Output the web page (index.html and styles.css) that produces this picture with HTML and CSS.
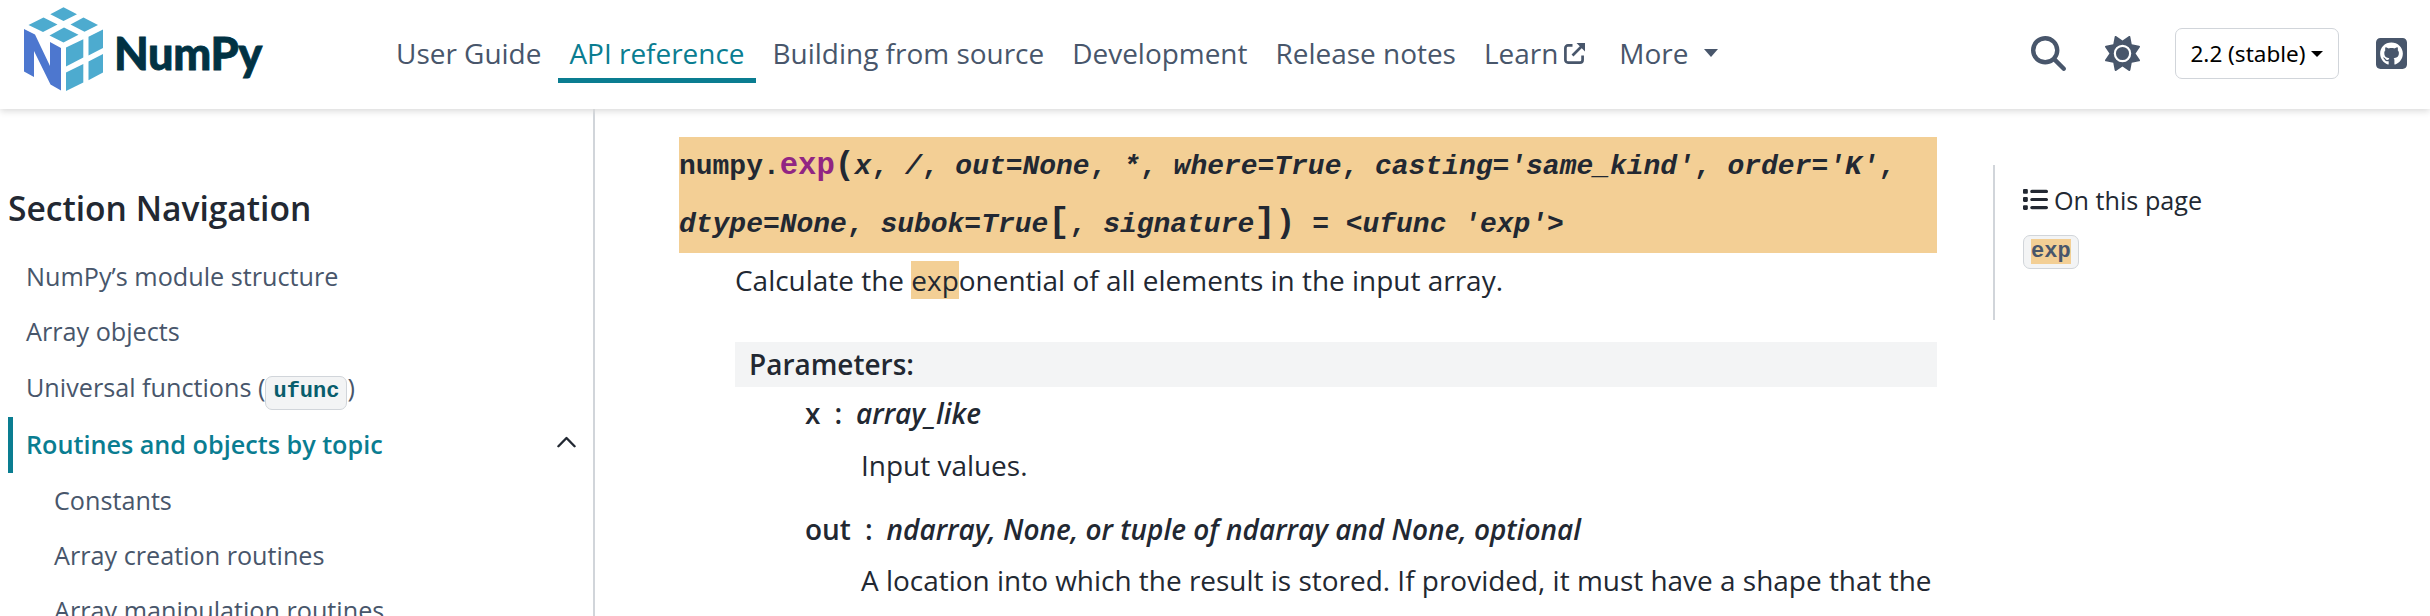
FILE: index.html
```html
<!DOCTYPE html>
<html lang="en">
<head>
<meta charset="utf-8">
<title>numpy.exp — NumPy v2.2 Manual</title>
<link rel="stylesheet" href="styles.css">
</head>
<body>
<header class="header">
  <a class="logo">
    <svg class="logo-mark" viewBox="0 0 80 86" width="80" height="86">
      <g fill="#4dabcf">
        <path d="M39.5 0.3 53 7.3 39.5 14 26.300 7.300Z"/>
        <path d="M19.500 10.500 33.500 17.500 19 25 4.500 18Z"/>
        <path d="M59.500 10.500 74 18 60.500 24.800 46.500 17.500Z"/>
        <path d="M40 20.500 54.500 27.800 39.500 35.500 25.500 28.500Z"/>
        <path d="M42 40.500 59.300 32.300V50.500L42 59.500Z"/>
        <path d="M64.500 29.800 79 22.500V41L64.500 48.500Z"/>
        <path d="M42 65.500 59.300 57V75.500L42 84Z"/>
        <path d="M64.500 54.500 79 47V65.500L64.500 73.300Z"/>
      </g>
      <path fill="#4d77cf" d="M0 22 11 27.500 26 59V35L37 41V83.500L26.500 77.500 10 44V70L0 64.500Z"/>
    </svg>
    <span class="logo-text">NumPy</span>
  </a>
  <nav class="nav">
    <a>User Guide</a>
    <a class="current">API reference</a>
    <a>Building from source</a>
    <a>Development</a>
    <a>Release notes</a>
    <a class="ext">Learn<svg viewBox="0 0 21 21" width="21" height="21" fill="none" stroke="currentColor" stroke-width="2.700"><path d="M8.500 2.400H4a2.600 2.600 0 0 0-2.600 2.600V17A2.600 2.600 0 0 0 4 19.600H16A2.600 2.600 0 0 0 18.600 17V12.500M8.500 12.500 17.500 3.500"/><path fill="currentColor" stroke="none" d="M12.500 0H21V8.500Z"/></svg></a>
    <a class="more">More<i class="caret"></i></a>
  </nav>
  <div class="tools">
    <svg class="ic-search" viewBox="0 0 512 512" width="35" height="35"><path fill="currentColor" d="M416 208c0 45.900-14.900 88.300-40 122.700L502.600 457.400c12.500 12.500 12.500 32.800 0 45.300s-32.800 12.500-45.300 0L330.700 376c-34.400 25.200-76.800 40-122.700 40C93.100 416 0 322.900 0 208S93.100 0 208 0S416 93.100 416 208zM208 352a144 144 0 1 0 0-288 144 144 0 1 0 0 288z"/></svg>
    <svg class="ic-sun" viewBox="0 0 512 512" width="35" height="35"><path fill="currentColor" d="M361.500 1.200c5 2.100 8.600 6.600 9.600 11.900L391 121l107.900 19.800c5.300 1 9.800 4.600 11.900 9.600s1.500 10.700-1.600 15.200L446.900 256l62.300 90.300c3.100 4.500 3.700 10.200 1.600 15.200s-6.600 8.600-11.900 9.600L391 391 371.100 498.900c-1 5.300-4.600 9.800-9.600 11.900s-10.700 1.500-15.200-1.600L256 446.900l-90.300 62.300c-4.500 3.100-10.200 3.700-15.200 1.600s-8.600-6.600-9.600-11.900L121 391 13.100 371.100c-5.300-1-9.800-4.600-11.900-9.600s-1.500-10.700 1.600-15.200L65.100 256 2.800 165.700c-3.100-4.500-3.700-10.200-1.600-15.200s6.600-8.600 11.900-9.600L121 121 140.900 13.100c1-5.300 4.600-9.800 9.600-11.900s10.700-1.500 15.200 1.600L256 65.100 346.300 2.800c4.500-3.100 10.200-3.700 15.200-1.600zM160 256a96 96 0 1 1 192 0 96 96 0 1 1 -192 0zm224 0a128 128 0 1 0 -256 0 128 128 0 1 0 256 0z"/></svg>
    <button class="version">2.2 (stable)<i class="caret"></i></button>
    <svg class="ic-github" viewBox="0 32 448 448" width="31" height="31"><path fill="currentColor" d="M448 96c0-35.300-28.700-64-64-64H64C28.700 32 0 60.700 0 96V416c0 35.300 28.700 64 64 64H384c35.300 0 64-28.700 64-64V96zM265.800 407.700c0-1.800 0-6 .1-11.600c.1-11.400 .1-28.800 .1-43.700c0-15.600-5.200-25.500-11.300-30.700c37-4.100 76-9.200 76-73.100c0-18.200-6.500-27.300-17.100-39c1.700-4.300 7.400-22-1.700-45c-13.900-4.300-45.700 17.900-45.700 17.900c-13.200-3.700-27.500-5.600-41.600-5.600s-28.400 1.900-41.600 5.600c0 0-31.800-22.200-45.700-17.900c-9.100 22.900-3.500 40.600-1.700 45c-10.600 11.700-15.600 20.800-15.600 39c0 63.600 37.300 69 74.300 73.100c-4.800 4.300-9.100 11.700-10.600 22.300c-9.500 4.300-33.800 11.700-48.300-13.900c-9.100-15.800-25.500-17.100-25.500-17.100c-16.200-.2-1.100 10.200-1.100 10.200c10.800 5 18.400 24.200 18.400 24.200c9.700 29.700 56.100 19.700 56.100 19.700c0 9 .1 21.700 .1 30.600c0 4.800 .1 8.600 .1 10c0 4.300-3 9.500-11.500 8C106 393.600 59.800 330.800 59.800 257.400c0-91.800 70.200-161.500 162-161.500s166.200 69.700 166.200 161.500c.1 73.400-44.700 136.300-110.700 158.300c-8.400 1.500-11.500-3.700-11.500-8z"/></svg>
  </div>
</header>
<div class="page">
  <aside class="sidebar">
    <p class="side-title">Section Navigation</p>
    <ul class="side-list">
      <li><a>NumPy’s module structure</a></li>
      <li><a>Array objects</a></li>
      <li class="row-code"><a>Universal functions (<code>ufunc</code>)</a></li>
      <li class="active"><a>Routines and objects by topic</a><svg viewBox="0 0 20 12" width="19" height="12" fill="none" stroke="currentColor" stroke-width="2.500" stroke-linecap="round" stroke-linejoin="round"><path d="M1.500 10.500 10 1.800 18.500 10.500"/></svg></li>
      <li class="sub"><a>Constants</a></li>
      <li class="sub"><a>Array creation routines</a></li>
      <li class="sub"><a>Array manipulation routines</a></li>
    </ul>
  </aside>
  <main class="content">
    <div class="sig">numpy.<span class="name">exp</span><span class="paren">(</span><em>x</em>, <em>/</em>, <em>out=None</em>, <em>*</em>, <em>where=True</em>, <em>casting='same_kind'</em>, <em>order='K'</em>,<br><em>dtype=None</em>, <em>subok=True</em><span class="bracket">[</span>, <em>signature</em><span class="bracket">]</span><span class="paren">)</span> <em>= &lt;ufunc 'exp'&gt;</em></div>
    <div class="desc">
      <p class="summary">Calculate the <mark>exp</mark>onential of all elements in the input array.</p>
      <div class="field">Parameters:</div>
      <dl class="params">
        <dt>x<span class="colon">:</span><em>array_like</em></dt>
        <dd>Input values.</dd>
        <dt>out<span class="colon">:</span><em>ndarray, None, or tuple of ndarray and None, optional</em></dt>
        <dd>A location into which the result is stored. If provided, it must have a shape that the<br>inputs broadcast to. If not provided or None, a freshly-allocated array is returned. A</dd>
      </dl>
    </div>
  </main>
  <aside class="toc">
    <p class="toc-title"><svg viewBox="16 48 496 416" width="25" height="21"><path fill="currentColor" d="M40 48C26.700 48 16 58.700 16 72v48c0 13.300 10.700 24 24 24H88c13.300 0 24-10.700 24-24V72c0-13.300-10.700-24-24-24H40zM192 64c-17.700 0-32 14.300-32 32s14.300 32 32 32H480c17.700 0 32-14.300 32-32s-14.300-32-32-32H192zm0 160c-17.700 0-32 14.300-32 32s14.300 32 32 32H480c17.700 0 32-14.300 32-32s-14.300-32-32-32H192zm0 160c-17.700 0-32 14.300-32 32s14.300 32 32 32H480c17.700 0 32-14.300 32-32s-14.300-32-32-32H192zM16 232v48c0 13.300 10.700 24 24 24H88c13.300 0 24-10.700 24-24V232c0-13.300-10.700-24-24-24H40c-13.300 0-24 10.700-24 24zM40 368c-13.300 0-24 10.700-24 24v48c0 13.300 10.700 24 24 24H88c13.300 0 24-10.700 24-24V392c0-13.300-10.700-24-24-24H40z"/></svg>On this page</p>
    <code class="toc-code"><mark>exp</mark></code>
  </aside>
</div>
</body>
</html>
```
FILE: styles.css
```css
* { box-sizing: border-box; }
body {
  margin: 0;
  height: 616px;
  overflow: hidden;
  background: #fff;
  color: #222832;
  font: 27.960px/46px "Open Sans", "Noto Sans", sans-serif;
}
p, ul, dl, dd { margin: 0; padding: 0; }
code { font-family: "Liberation Mono", monospace; font-weight: 700; }
mark { background: #f3cf95; color: inherit; }
.header {
  position: relative;
  z-index: 1;
  display: flex;
  align-items: flex-start;
  height: 109px;
  padding-left: 24px;
  background: #fff;
  box-shadow: 0 2px 7px #d8d8d8;
  color: #48566b;
}
.logo { display: flex; width: 361px; }
.logo-mark { margin-top: 7px; flex: none; }
.logo-text {
  margin: 23px 0 0 10px;
  font: 900 45px/60px Lato, sans-serif;
  letter-spacing: -0.3px;
  -webkit-text-stroke: 0.8px #013243;
  color: #013243;
}
.nav { display: flex; gap: 6px; margin-top: 25px; white-space: nowrap; }
.nav a { padding: 5px 11px 7px; line-height: 46px; height: 58px; display: block; }
.nav .current { color: #0a7d91; border-bottom: 5px solid #0a7d91; }
.nav .ext svg { margin-left: 6px; }
.nav .more { margin-left: 6px; }
.caret {
  display: inline-block;
  border: 7.500px solid transparent;
  border-top: 8px solid currentColor;
  border-bottom: 0;
  margin-left: 16px;
  vertical-align: 7px;
}
.tools { display: flex; align-items: center; margin: 28px 23px 0 auto; height: 51px; }
.ic-search { margin-right: 39px; }
.ic-sun { margin-right: 35px; }
.version {
  width: 164px;
  height: 51px;
  padding: 0 0 1px;
  border: 1.500px solid #d1d5da;
  border-radius: 7px;
  background: #fff;
  color: #000;
  font: 22.500px/33px "Noto Sans", sans-serif;
  white-space: nowrap;
}
.version .caret { border-width: 6px 6px 0; margin-left: 6px; vertical-align: 5px; }
.ic-github { margin-left: 37px; }
.page { display: flex; align-items: flex-start; height: 507px; }
.sidebar { width: 595px; height: 507px; padding: 75px 0 0 8px; border-right: 2px solid #d1d5da; flex: none; overflow: hidden; }
.side-title { font-size: 33.600px; font-weight: 600; line-height: 48px; }
.side-list { list-style: none; margin-top: 17px; color: #48566b; font-size: 25.200px; }
.side-list li { height: 55px; padding-left: 18px; line-height: 55px; white-space: nowrap; }
.side-list .row-code { height: 58px; line-height: 56px; }
.side-list .active {
  display: flex;
  justify-content: space-between;
  height: 56px;
  padding: 0 17px 0 13px;
  border-left: 5px solid #0a7d91;
  color: #0a7d91;
  font-weight: 600;
}
.active svg { margin-top: 19px; color: #222832; }
.side-list .sub { padding-left: 46px; }
.side-list code {
  display: inline-block;
  height: 34px;
  padding: 0 7px;
  border: 1.500px solid #d1d5da;
  border-radius: 7px;
  background: #f3f4f5;
  color: #085d6c;
  font-size: 22px;
  line-height: 30px;
}
.content { width: 1258px; margin: 28px 0 0 84px; flex: none; }
.sig {
  height: 116px;
  background: #f3cf95;
  font: 700 27.970px/58px "Liberation Mono", monospace;
  white-space: pre;
}
.name { color: #912583; font-size: 30.600px; }
.paren, .bracket { font-size: 33px; line-height: 1; }
.bracket { font-size: 35.500px; }
.desc { padding-left: 56px; }
.summary { margin-top: 4px; }
.field { height: 45px; margin-top: 39px; padding-left: 14px; background: #f3f4f5; font-weight: 600; line-height: 44px; }
.params { padding: 3px 0 0 70px; }
.params dt { font-weight: 600; }
.params dd { padding-left: 56px; margin: 5.800px 0 17.800px; white-space: nowrap; }
.colon { margin: 0 14px; }
.toc { margin: 56px 0 0 56px; width: 300px; height: 155px; padding: 12px 0 0 28px; border-left: 2px solid #d1d5da; }
.toc-title { font-size: 25.200px; }
.toc-title svg { margin-right: 6px; }
.toc-code {
  display: inline-flex;
  align-items: center;
  height: 34px;
  margin-top: 3px;
  padding: 0 7px;
  border: 1.500px solid #d1d5da;
  border-radius: 7px;
  background: #f3f4f5;
  color: #48566b;
  font-size: 22px;
}
.toc-code mark { line-height: 25px; }
```
